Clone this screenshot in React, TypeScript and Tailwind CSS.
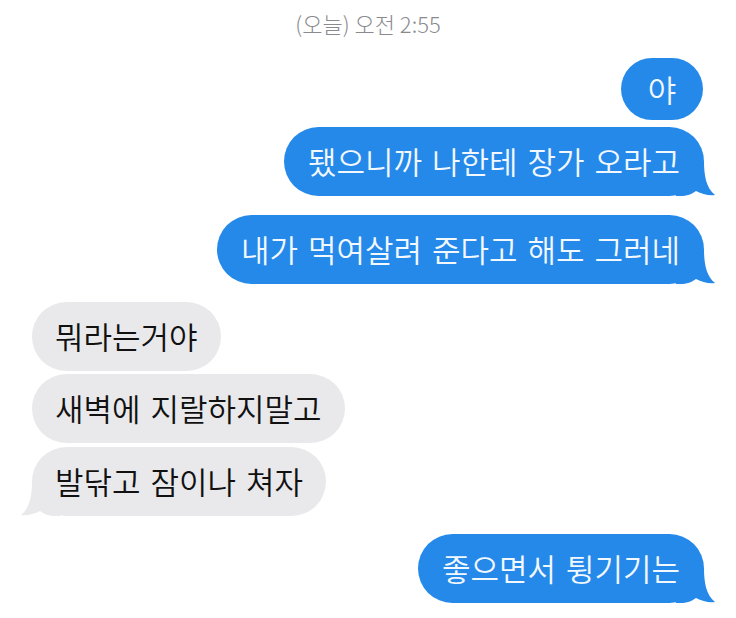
import React from 'react'

const font = { fontFamily: '"Noto Sans CJK KR", "Noto Sans", sans-serif' }

function Tail({ color, side }: { color: string; side: 'left' | 'right' }) {
  return (
    <svg
      width="40"
      height="35"
      viewBox="0 0 40 35"
      className={
        side === 'right'
          ? 'absolute -right-[12px] bottom-0'
          : 'absolute -left-[12px] bottom-0 scale-x-[-1]'
      }
    >
      <path
        d="M0 0 L28 0 C28 14 30 27 39 34 C33 35 26 33 20 30 C16 33 11 35 4 35 L0 35 Z"
        fill={color}
      />
    </svg>
  )
}

function Sent({ text, tail, className = '' }: { text: string; tail?: boolean; className?: string }) {
  return (
    <div
      className={`relative self-end mr-[32px] h-[69px] px-[24px] flex items-center rounded-[35px] bg-[#2589ea] text-[#f2f8ff] text-[31px] font-[350] [word-spacing:3px] ${className}`}
    >
      <span className="relative z-10 whitespace-nowrap">{text}</span>
      {tail && <Tail color="#2589ea" side="right" />}
    </div>
  )
}

function Received({ text, tail, className = '' }: { text: string; tail?: boolean; className?: string }) {
  return (
    <div
      className={`relative self-start ml-[32px] h-[69px] px-[23px] flex items-center rounded-[35px] bg-[#e9e9eb] text-[#111111] text-[31px] font-[350] [word-spacing:3px] ${className}`}
    >
      <span className="relative z-10 whitespace-nowrap">{text}</span>
      {tail && <Tail color="#e9e9eb" side="left" />}
    </div>
  )
}

export default function App() {
  return (
    <div className="w-[736px] h-[618px] bg-white overflow-hidden flex flex-col" style={font}>
      <div className="pt-[7px] h-[58px] text-center text-[22px] font-light text-[#8a8a8e]">(오늘) 오전 2:55</div>

      <div className="self-end mr-[33px] w-[82px] h-[62px] rounded-full bg-[#2589ea] text-[#f2f8ff] text-[31px] font-[350] flex items-center justify-center">
        야
      </div>

      <Sent text="됐으니까 나한테 장가 오라고" tail className="mt-[7px]" />
      <Sent text="내가 먹여살려 준다고 해도 그러네" tail className="mt-[19px]" />

      <Received text="뭐라는거야" className="mt-[18px]" />
      <Received text="새벽에 지랄하지말고" className="mt-[3px]" />
      <Received text="발닦고 잠이나 쳐자" tail className="mt-[4px]" />

      <Sent text="좋으면서 튕기기는" tail className="mt-[18px]" />
    </div>
  )
}
